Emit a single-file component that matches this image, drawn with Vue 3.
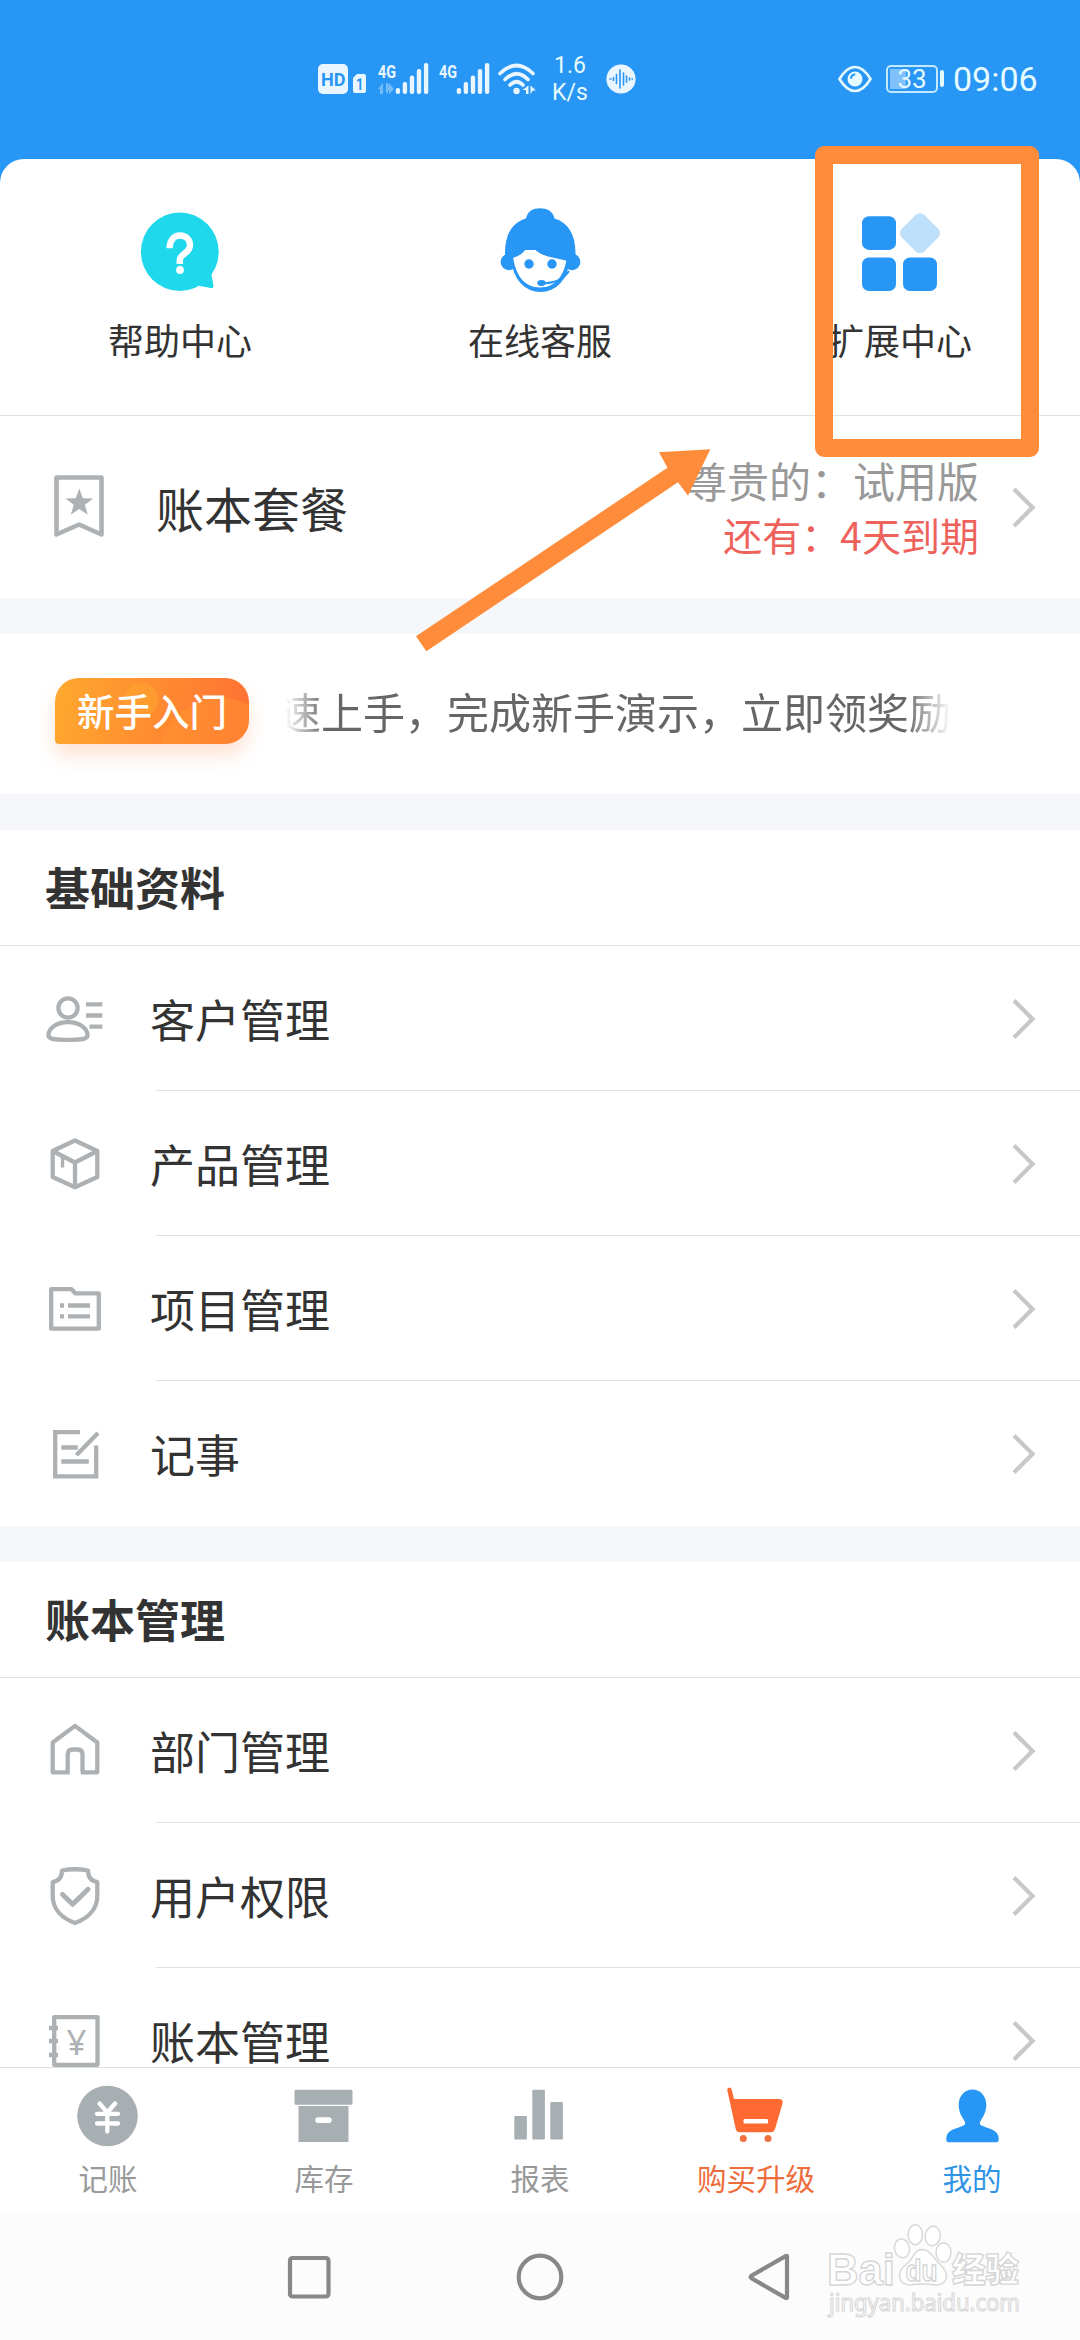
<script setup>
const shortcuts = [
  { id: 'help', label: '帮助中心' },
  { id: 'service', label: '在线客服' },
  { id: 'extend', label: '扩展中心' },
]

const groups = [
  {
    title: '基础资料',
    rows: [
      { icon: 'customer', label: '客户管理' },
      { icon: 'product', label: '产品管理' },
      { icon: 'project', label: '项目管理' },
      { icon: 'note', label: '记事' },
    ],
  },
  {
    title: '账本管理',
    rows: [
      { icon: 'house', label: '部门管理' },
      { icon: 'shield', label: '用户权限' },
      { icon: 'ledger', label: '账本管理' },
    ],
  },
]

const tabs = [
  { id: 'record', label: '记账' },
  { id: 'stock', label: '库存' },
  { id: 'report', label: '报表' },
  { id: 'buy', label: '购买升级' },
  { id: 'mine', label: '我的' },
]
</script>

<template>
  <div class="screen">
    <header class="status">
      <div class="status-left">
        <svg class="ic-hd" width="50" height="32" viewBox="0 0 50 32">
          <rect x="0" y="1" width="30" height="30" rx="5" fill="#eaf6ff" />
          <text x="3" y="22.700" font-size="19" font-weight="700" textLength="24.500" lengthAdjust="spacingAndGlyphs" fill="#2896f5">HD</text>
          <path d="M39 11h7a2 2 0 0 1 2 2v15a2 2 0 0 1-2 2h-9a2 2 0 0 1-2-2V15z" fill="#eaf6ff" />
          <text x="38" y="27" font-size="16" font-weight="700" textLength="7.500" lengthAdjust="spacingAndGlyphs" fill="#2896f5">1</text>
        </svg>
        <svg v-for="n in 2" :key="n" class="ic-signal" width="51" height="32" viewBox="0 0 51 32" fill="#eaf6ff">
          <text x="0" y="14.500" font-size="19" font-weight="700" textLength="18" lengthAdjust="spacingAndGlyphs">4G</text>
          <path v-if="n === 1" opacity=".4" d="M5 20v11h-3v-5h-2zM8 20h2v11l-2-2zM12 31l-2-5V20zM11 20l5 6-5 5z" />
          <rect x="17.700" y="25" width="4.400" height="6" rx="2" />
          <rect x="24.700" y="19" width="4.400" height="12" rx="2" />
          <rect x="31.800" y="12.500" width="4.400" height="18.500" rx="2" />
          <rect x="38.800" y="6" width="4.400" height="25" rx="2" />
          <rect x="45.900" y="0" width="4.400" height="31" rx="2" />
        </svg>
        <svg class="ic-wifi" width="38" height="32" viewBox="0 0 38 32" fill="none" stroke="#eaf6ff" stroke-width="3.600" stroke-linecap="round">
          <path d="M2 10.500Q18.500-5.500 35 10.500" />
          <path d="M7 16.500Q18.500 5 30 16.500" />
          <path d="M12 22Q18.500 15.500 25 22" />
          <circle cx="18.500" cy="28" r="3.200" fill="#eaf6ff" stroke="none" />
          <path d="M30.500 22.500V31h-2.500v-4h-3.500zM32.500 31v-8.500l5.500 5h-3z" fill="#eaf6ff" stroke="none" />
        </svg>
        <div class="speed"><span>1.6</span><span>K/s</span></div>
        <svg class="ic-wave" width="30" height="30" viewBox="0 0 30 30">
          <circle cx="15" cy="15" r="14.600" fill="#eaf6ff" />
          <path d="M4 15h1M7.500 13.500v3M10.500 10.500v9M14 6v18M17.500 9v12M20.500 12v6M23.500 14v2M26 15h.5" stroke="#2896f5" stroke-width="1.600" stroke-linecap="round" />
        </svg>
      </div>
      <div class="status-right">
        <svg class="ic-eye" width="34" height="28" viewBox="0 0 34 28" fill="none">
          <path d="M1.500 14C11-2 23-2 32.500 14 23 30 11 30 1.500 14z" stroke="#e6fbff" stroke-width="2.600" />
          <circle cx="17" cy="14" r="7.500" fill="#e6fbff" />
          <path d="M13 13q.5-3 3.500-3.500" stroke="#2896f5" stroke-width="1.800" stroke-linecap="round" />
        </svg>
        <div class="battery"><i></i><span>33</span></div>
        <div class="battery-tip"></div>
        <span class="clock">09:06</span>
      </div>
    </header>

    <main class="content">
      <section class="shortcuts">
        <div v-for="s in shortcuts" :key="s.id" class="shortcut">
          <svg v-if="s.id === 'help'" width="90" height="90" viewBox="135 206 90 90" fill="#1fd8ec">
            <ellipse cx="179.800" cy="251.800" rx="38.900" ry="39.200" />
            <path d="M211.500 274.500l1.900 11c.2 1.900-.7 2.800-2.500 2.500l-12.500-2.200z" />
            <path d="M169.600 248.200c0-7.200 4-12.700 10.200-12.700s10.200 4 10.200 9.700c0 8.300-10.200 8.300-10.200 14.800v4" fill="none" stroke="#fff" stroke-width="6.400" />
            <circle cx="180" cy="270" r="3.900" fill="#fff" />
          </svg>
          <svg v-else-if="s.id === 'service'" width="90" height="90" viewBox="495 206 90 90">
            <ellipse cx="540.500" cy="261" rx="28.500" ry="31" fill="#2896f5" />
            <ellipse cx="509" cy="262" rx="8.400" ry="8.300" fill="#2896f5" />
            <ellipse cx="572" cy="262" rx="8.400" ry="8.300" fill="#2896f5" />
            <path d="M512.500 250h55c-1 24-11 37.500-27.500 37.500s-26.500-14-27.500-37.500z" fill="#fff" />
            <path d="M505 255c-.5-20 7-32.500 21-36.500 1.500-7.500 7-10.300 14-10.300s13 2.800 14.500 10.300c14 4 21.500 16.500 21 36.500l-7.500 6.500c-13-5.500-31-2-39-21-1.500 9-6 14-16 17.500z" fill="#2896f5" />
            <circle cx="529" cy="264" r="4.700" fill="#2896f5" />
            <circle cx="552" cy="264" r="4.700" fill="#2896f5" />
            <path d="M541 283c12 1 22-3 28-12" fill="none" stroke="#2896f5" stroke-width="2" />
            <ellipse cx="541.500" cy="283" rx="4.200" ry="3" fill="#2896f5" />
          </svg>
          <svg v-else width="90" height="90" viewBox="855 206 90 90" fill="#2896f5">
            <rect x="862" y="216.300" width="34" height="33.600" rx="7" />
            <rect x="862" y="257.500" width="34" height="33.600" rx="7" />
            <rect x="903" y="257.500" width="34" height="33.600" rx="7" />
            <rect x="904" y="217.200" width="32" height="32" rx="6.500" transform="rotate(45 920 233.200)" fill="#bfe0fb" />
          </svg>
          <span>{{ s.label }}</span>
        </div>
      </section>

      <section class="plan">
        <svg class="plan-icon" width="60" height="70" viewBox="49 472 60 70">
          <path d="M56.500 477.500h45v57l-22.500-10-22.500 10z" fill="none" stroke="#adb1b3" stroke-width="4.600" stroke-linejoin="round" />
          <path d="M79.300 488.500l3.500 9.700 10.300.3-8.200 6.300 2.900 9.900-8.500-5.800-8.500 5.800 2.900-9.900-8.200-6.300 10.300-.3z" fill="#adb1b3" />
        </svg>
        <span class="plan-name">账本套餐</span>
        <div class="plan-info">
          <span class="edition">尊贵的：试用版</span>
          <span class="expire">还有：4天到期</span>
        </div>
        <svg class="chevron" width="26" height="42" viewBox="0 0 26 42"><path d="M3 3l18.500 18.500L3 40" /></svg>
      </section>

      <section class="guide">
        <div class="badge">
          <svg class="badge-art" width="194" height="66" viewBox="0 0 194 66">
            <circle cx="86" cy="22" r="17" fill="#ffa72e" opacity=".5" />
            <circle cx="166" cy="82" r="62" fill="#ff9a30" opacity=".4" />
          </svg>
          <span>新手入门</span>
        </div>
        <div class="marquee"><span>速上手，完成新手演示，立即领奖励</span></div>
      </section>

      <section v-for="g in groups" :key="g.title" class="group">
        <h2>{{ g.title }}</h2>
        <div v-for="r in g.rows" :key="r.label" class="row">
          <svg class="row-icon" width="60" height="60" viewBox="0 0 60 60">
            <template v-if="r.icon === 'customer'">
              <circle cx="23" cy="20" r="9.600" />
              <path d="M23 34.200c-12 0-19.500 6.500-19.500 13 0 3.500 3.500 4.600 19.500 4.600s19.500-1.100 19.500-4.600c0-6.500-7.500-13-19.500-13z" />
              <path d="M41 16.300h16.300M41 27.500h16.300M44.500 38.700h12.800" />
            </template>
            <template v-else-if="r.icon === 'product'">
              <path d="M30 7.500L52.300 18v26L30 54.200 7.700 44V18z" />
              <path d="M7.700 18L30 29.500 52.300 18M30 29.500v24" />
              <path d="M17.500 23.500v11" stroke-width="3.400" />
            </template>
            <template v-else-if="r.icon === 'project'">
              <path d="M6.200 11.200h20.300l4 4.200h23.300v35.300H6.200z" />
              <path d="M15 27.500h4M23 27.500h22M15 38.300h4M23 38.300h22" />
            </template>
            <template v-else-if="r.icon === 'note'">
              <path d="M35 9.200H10.200v44.100h41V22.500" stroke-linejoin="miter" />
              <path d="M16.300 24.500h16.500M16.300 38.500h27.500M31.500 32l21.500-22" />
            </template>
            <template v-else-if="r.icon === 'house'">
              <path d="M24.700 52.300h-17V22.500L30 5.900l22.300 16.600v29.800H35.800M22.700 52.500V34.500q0-5 5-5h4.800q5 0 5 5v18" />
            </template>
            <template v-else-if="r.icon === 'shield'">
              <path d="M17 5.500q13-2.500 26 0c0 7 3 10.500 9.300 11.500v14c0 13.500-10 22.500-22.300 27C17.700 53.500 7.700 44.500 7.700 31V17C14 16 17 12.500 17 5.500z" />
              <path d="M17.500 29.500l10.200 9.800L43 24.300" stroke-width="5" stroke-linecap="round" />
            </template>
            <template v-else>
              <path d="M9.200 7.200h43.300v47.600H9.200z" />
              <path d="M4 18h9M4 31h9M4 45h9" />
              <text x="31.500" y="44.500" font-size="35" text-anchor="middle" class="yen">¥</text>
            </template>
          </svg>
          <div class="row-body">
            <span>{{ r.label }}</span>
            <svg class="chevron" width="26" height="42" viewBox="0 0 26 42"><path d="M3 3.500L21.500 22 3 40.500" /></svg>
          </div>
        </div>
      </section>
    </main>

    <nav class="tabs">
      <div v-for="t in tabs" :key="t.id" class="tab" :class="t.id">
        <svg width="64" height="64" viewBox="0 0 64 64">
          <template v-if="t.id === 'record'">
            <circle cx="31.500" cy="32" r="30.300" fill="#a8afb3" />
            <path d="M23.500 19.500l7.800 9 7.800-9M31.300 28.500v19M21 29.800h21M21 39.500h21" fill="none" stroke="#fff" stroke-width="4.300" stroke-linecap="round" />
          </template>
          <template v-else-if="t.id === 'stock'">
            <rect x="2.500" y="5.700" width="58" height="15" rx="1.500" fill="#a8afb3" />
            <path d="M6.500 22h50v36h-50z" fill="#a8afb3" />
            <rect x="23.200" y="33.200" width="16.600" height="5.800" rx="2.900" fill="#fff" />
          </template>
          <template v-else-if="t.id === 'report'">
            <rect x="6.300" y="32" width="12.600" height="23.600" rx="1" fill="#a8afb3" />
            <rect x="24.300" y="5.700" width="12.600" height="49.900" rx="1" fill="#a8afb3" />
            <rect x="42.300" y="18" width="12.600" height="37.600" rx="1" fill="#a8afb3" />
          </template>
          <template v-else-if="t.id === 'buy'">
            <path d="M3.300 6.300a2.200 2.200 0 0 1 4.300-1l2.400 9.700h45c3 0 4.300 2 3.500 4.500l-7.300 25c-.8 2.500-2 3.700-4.600 3.700H16c-2.500 0-3.800-1-4.300-3.500z" fill="#ff6a33" />
            <rect x="19.500" y="35" width="24.500" height="4.600" rx="1.200" fill="#fff" />
            <circle cx="19.300" cy="54.500" r="3.500" fill="#f07040" />
            <circle cx="44" cy="54.500" r="3.500" fill="#f07040" />
          </template>
          <template v-else>
            <path d="M32.500 5.500c8 0 13.800 6.500 13.800 15.500 0 7.500-3.500 12-6 16.500-1.300 3 .2 3.700 3 4.700C52 45.500 58.700 47 58.700 54.500v1.500q0 2.200-2.200 2.200h-48Q6.300 58.200 6.300 56v-1.500C6.300 47 13 45.500 21.700 42.200c2.800-1 4.300-1.700 3-4.700-2.500-4.500-6-9-6-16.500 0-9 5.800-15.500 13.800-15.500z" fill="#2896f5" />
          </template>
        </svg>
        <span>{{ t.label }}</span>
      </div>
    </nav>

    <footer class="sysnav">
      <svg width="50" height="50" viewBox="0 0 50 50"><rect x="5" y="6" width="38.500" height="38.500" rx="2.500" /></svg>
      <svg width="50" height="50" viewBox="0 0 50 50"><circle cx="25" cy="25" r="21.300" /></svg>
      <svg width="50" height="50" viewBox="0 0 50 50"><path d="M42 4.500v41q0 1-1.500.3L6.500 26.300q-1.800-1.300 0-2.600L40.500 4.200q1.500-.7 1.500.3z" /></svg>
    </footer>

    <svg class="mark-box" width="224" height="311" viewBox="0 0 224 311">
      <rect x="9" y="9" width="206" height="293" fill="none" stroke="#ff8c3a" stroke-width="18" stroke-linejoin="round" />
    </svg>
    <svg class="mark-arrow" width="300" height="210" viewBox="413 446 300 210">
      <path d="M416 636.300L667.500 467.700 659 452.300 710.300 449.300 688 495.700 678 482.300 426.300 651.300z" fill="#ff8c3a" />
    </svg>

    <svg class="watermark" width="210" height="100" viewBox="820 2220 210 100" fill="#fff" stroke="#d6d6d6" stroke-width="1.400">
      <text x="827" y="2284.500" font-size="45" font-weight="700" textLength="68" lengthAdjust="spacingAndGlyphs">Bai</text>
      <ellipse cx="902" cy="2248.300" rx="7.500" ry="9.500" transform="rotate(-12 902 2248.300)" />
      <ellipse cx="915.300" cy="2234.700" rx="7.200" ry="10" />
      <ellipse cx="932.700" cy="2236" rx="7.500" ry="9.800" transform="rotate(8 932.700 2236)" />
      <ellipse cx="943.500" cy="2252.500" rx="7.500" ry="9.800" />
      <path d="M922 2249.500c8 0 11 8 17 14 5 4.500 8 8 7.500 13-1 7-7 9-13 8.300-8-1.200-15-1-22 0-7 .8-12-3-12-9.500 0-6 4-8.500 9-13s6-12.800 13.500-12.800z" />
      <text x="905.500" y="2280.500" font-size="29" font-weight="700" textLength="32" lengthAdjust="spacingAndGlyphs">du</text>
      <text x="952" y="2282" font-size="34" font-weight="900" textLength="67" lengthAdjust="spacingAndGlyphs" class="cjk">经验</text>
      <text x="829" y="2310.500" font-size="24" textLength="191" lengthAdjust="spacingAndGlyphs" class="url">jingyan.baidu.com</text>
    </svg>
  </div>
</template>

<style>
body {
  margin: 0;
  background: #fff;
}
</style>

<style scoped>
.screen {
  position: relative;
  display: flex;
  flex-direction: column;
  width: 1080px;
  height: 2340px;
  overflow: hidden;
  background: #2896f5;
  color: #333;
  font-family: "Noto Sans CJK SC", "Noto Sans", sans-serif;
}
svg {
  display: block;
  flex: none;
  overflow: visible;
}

/* status bar */
.status {
  display: flex;
  flex: none;
  justify-content: space-between;
  align-items: center;
  box-sizing: border-box;
  height: 159px;
  padding: 0 43px 2px 318px;
  color: #e6fbff;
  font-family: Roboto, "Noto Sans", sans-serif;
}
.status-left,
.status-right {
  display: flex;
  align-items: center;
}
.ic-hd {
  margin-right: 10px;
}
.ic-signal {
  margin-right: 10px;
}
.ic-wifi {
  margin-left: -2px;
}
.speed {
  display: flex;
  flex-direction: column;
  align-items: center;
  width: 40px;
  margin: 0 16px 0 14px;
  font-size: 23px;
  line-height: 27px;
}
.ic-eye {
  margin-right: 14px;
}
.battery {
  display: flex;
  position: relative;
  justify-content: center;
  align-items: center;
  box-sizing: border-box;
  width: 52px;
  height: 28px;
  border: 2px solid #c3e9ff;
  border-radius: 5px;
  font-size: 26px;
  line-height: 28px;
}
.battery i {
  position: absolute;
  top: 2px;
  left: 2px;
  width: 16px;
  height: 20px;
  background: #80c0fb;
}
.battery span {
  position: relative;
}
.battery-tip {
  width: 4px;
  height: 17px;
  margin: 0 9px 0 2px;
  border-radius: 2px;
  background: #e6fbff;
}
.clock {
  width: 84px;
  font-size: 34px;
  line-height: 40px;
  white-space: nowrap;
}

/* page */
.content {
  flex: 1;
  min-height: 0;
  overflow: hidden;
  border-radius: 24px 24px 0 0;
  background: #fff;
}
.shortcuts {
  display: grid;
  grid-template-columns: repeat(3, 1fr);
  box-sizing: border-box;
  height: 257px;
  border-bottom: 1px solid #dde1e2;
}
.shortcut {
  display: flex;
  flex-direction: column;
  align-items: center;
  gap: 16px;
  padding-top: 47px;
  font-size: 36px;
  line-height: 54px;
}
.plan {
  display: flex;
  align-items: center;
  box-sizing: border-box;
  height: 182px;
  padding: 0 43px 0 49px;
}
.plan-name {
  flex: 1;
  margin-left: 47px;
  font-size: 48px;
  line-height: 60px;
}
.plan-info {
  display: flex;
  flex-direction: column;
  align-items: flex-end;
  margin-right: 32px;
  line-height: 55px;
  white-space: nowrap;
}
.edition {
  color: #999;
  font-size: 42px;
}
.expire {
  color: #ee625b;
  font-size: 39px;
}
.chevron {
  fill: none;
  stroke: #c8c8c8;
  stroke-width: 4.300;
}
.guide {
  display: flex;
  align-items: center;
  box-sizing: border-box;
  height: 232px;
  padding: 0 0 7px 55px;
  border-top: 36px solid #f5f7fb;
  border-bottom: 36px solid #f5f7fb;
}
.badge {
  position: relative;
  width: 194px;
  height: 66px;
  border-radius: 24px 24px 24px 4px;
  background: linear-gradient(100deg, #ffa92e, #ff7033);
  box-shadow: 0 12px 18px rgba(255, 120, 50, 0.2);
  color: #fff;
  font-size: 37.500px;
  font-weight: 500;
  line-height: 64px;
  text-align: center;
}
.badge-art {
  position: absolute;
  top: 0;
  left: 0;
  overflow: hidden;
  border-radius: 24px 24px 24px 4px;
}
.badge span {
  position: relative;
}
.marquee {
  display: flex;
  width: 666px;
  margin-left: 36px;
  overflow: hidden;
  color: #666;
  font-size: 42px;
  line-height: 60px;
  white-space: nowrap;
  -webkit-mask-image: linear-gradient(90deg, transparent, #000 40px, #000 620px, transparent);
  mask-image: linear-gradient(90deg, transparent, #000 40px, #000 620px, transparent);
}
.marquee span {
  margin-left: -6px;
}
.group + .group {
  border-top: 36px solid #f5f7fb;
}
h2 {
  box-sizing: border-box;
  height: 116px;
  margin: 0;
  padding-left: 45px;
  border-bottom: 1px solid #dfe2e3;
  font-size: 45px;
  font-weight: 700;
  line-height: 114px;
}
.row {
  display: flex;
  height: 145px;
  padding-left: 45px;
}
.row-icon {
  margin: 42px 51px 0 0;
  fill: none;
  stroke: #adb1b3;
  stroke-width: 4.300;
  stroke-linejoin: round;
}
.yen {
  fill: #adb1b3;
  stroke: none;
  font-family: "Noto Sans", sans-serif;
}
.row-body {
  display: flex;
  flex: 1;
  justify-content: space-between;
  align-items: center;
  box-sizing: border-box;
  padding-right: 43px;
  border-bottom: 1px solid #dfe2e3;
  font-size: 45px;
}
.row:last-child .row-body {
  border-bottom-color: transparent;
}
.row-body span {
  margin-left: -6px;
}

/* bottom tabs */
.tabs {
  display: grid;
  flex: none;
  grid-template-columns: repeat(5, 1fr);
  box-sizing: border-box;
  height: 147px;
  border-top: 1px solid #dadedf;
  background: #fff;
}
.tab {
  display: flex;
  flex-direction: column;
  align-items: center;
  gap: 9px;
  padding-top: 16px;
  color: #999;
  font-size: 29.500px;
  line-height: 40px;
}
.tab.buy {
  color: #ee6c3c;
}
.tab.mine {
  color: #2f93e6;
}
.sysnav {
  display: flex;
  flex: none;
  justify-content: center;
  align-items: center;
  gap: 180px;
  height: 126px;
  background: #fcfcfc;
}
.sysnav svg {
  fill: none;
  stroke: #888;
  stroke-width: 4.200;
}

/* overlays */
.mark-box {
  position: absolute;
  top: 146px;
  left: 815px;
}
.mark-arrow {
  position: absolute;
  top: 446px;
  left: 413px;
}
.watermark {
  position: absolute;
  top: 2220px;
  left: 820px;
  font-family: "Liberation Sans", sans-serif;
}
.watermark .cjk {
  font-family: "Noto Sans CJK SC", sans-serif;
}
.watermark .url {
  font-family: "Noto Sans", sans-serif;
  stroke-width: 1.100;
}
</style>
